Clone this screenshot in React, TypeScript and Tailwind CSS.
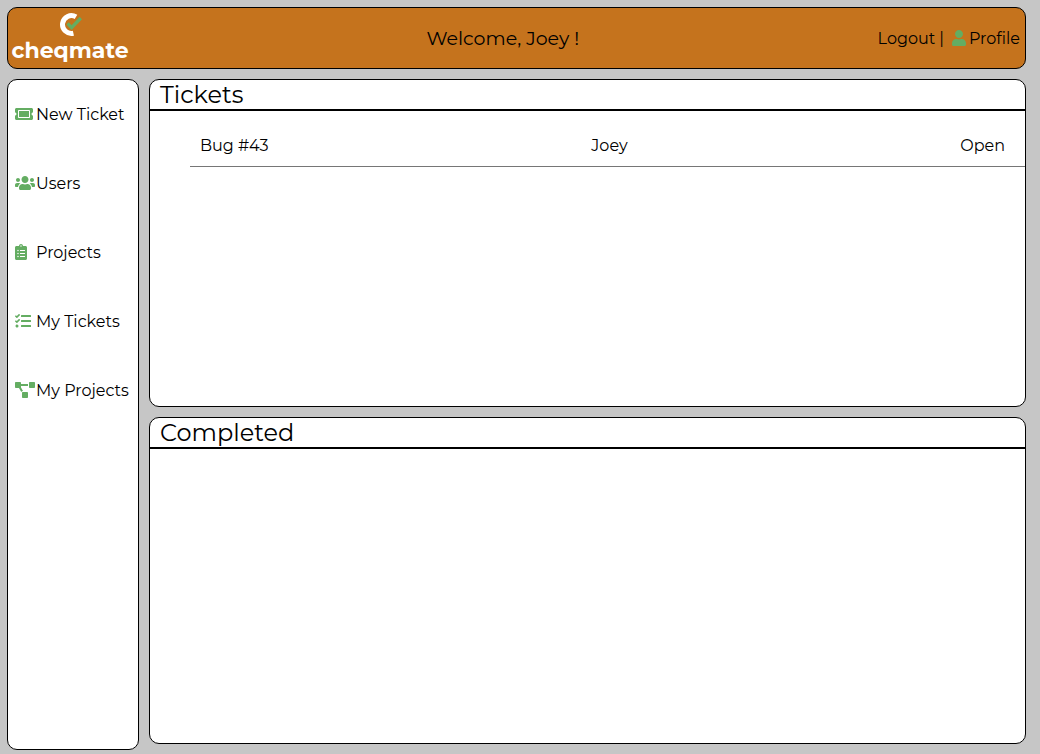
import type { ReactNode } from "react";
import {
  FaClipboardList,
  FaProjectDiagram,
  FaTasks,
  FaTicketAlt,
  FaUser,
  FaUsers,
} from "react-icons/fa";

type Ticket = { title: string; owner: string; status: string };

const openTickets: Ticket[] = [{ title: "Bug #43", owner: "Joey", status: "Open" }];

const navItems = [
  { label: "New Ticket", icon: <FaTicketAlt className="h-4 w-[18px]" /> },
  { label: "Users", icon: <FaUsers className="h-4 w-5" /> },
  { label: "Projects", icon: <FaClipboardList className="h-4 w-3" /> },
  { label: "My Tickets", icon: <FaTasks className="h-4 w-4" /> },
  { label: "My Projects", icon: <FaProjectDiagram className="h-4 w-5" /> },
];

function Logo() {
  return (
    <a href="#home" className="flex w-[116px] flex-col items-center text-white">
      <svg viewBox="0 0 24 24" className="h-6 w-6" fill="none" aria-hidden="true">
        <path d="M18 3.9A8.9 8.9 0 1 0 15.4 20.2" stroke="#fff" strokeWidth="5" />
        <path d="M9.6 10.4L13.6 14.6L22.8 5" stroke="#64ad62" strokeWidth="3.3" />
      </svg>
      <span className="text-[22px] leading-7 font-bold">cheqmate</span>
    </a>
  );
}

function Panel({ title, children }: { title: string; children?: ReactNode }) {
  return (
    <section className="overflow-hidden rounded-[10px] border border-black bg-white">
      <h2 className="border-b-2 border-black px-2.5 text-2xl leading-[29px]">{title}</h2>
      {children}
    </section>
  );
}

export default function App() {
  return (
    <div className="flex min-h-screen flex-col gap-2.5 bg-[#c6c6c6] pt-[7px] pr-[14px] pb-1 pl-[7px] font-['Montserrat','Inter',sans-serif] text-base text-black">
      <header className="flex h-[62px] items-center justify-between rounded-[10px] border border-black bg-[#c5731d] pt-0.5 pr-[5px] pl-1">
        <Logo />
        <h1 className="text-[19px]">Welcome, Joey !</h1>
        <div className="flex items-center gap-1">
          <a href="#logout">Logout</a>
          <span>|</span>
          <a href="#profile" className="flex items-center gap-[3px] pl-1">
            <span className="pb-0.5 text-[#64ad62]">
              <FaUser className="h-4 w-3.5" />
            </span>
            Profile
          </a>
        </div>
      </header>

      <div className="flex flex-1 gap-2.5">
        <nav className="w-[132px] shrink-0 rounded-[10px] border border-black bg-white pl-[7px]">
          <ul>
            {navItems.map((item) => (
              <li key={item.label}>
                <a href="#" className="flex h-[69px] items-center whitespace-nowrap">
                  <span className="w-[21px] shrink-0 pb-0.5 text-[#64ad62]">{item.icon}</span>
                  {item.label}
                </a>
              </li>
            ))}
          </ul>
        </nav>

        <main className="grid min-w-0 flex-1 grid-rows-2 gap-2.5 pb-1.5">
          <Panel title="Tickets">
            <div className="pt-4 pl-10">
              <table className="w-full table-fixed border-collapse" aria-label="Open tickets">
                <tbody>
                  {openTickets.map((ticket) => (
                    <tr key={ticket.title} className="h-[39px] border-b border-[#767676]">
                      <td className="pl-2.5 text-left">{ticket.title}</td>
                      <td className="pl-1 text-center">{ticket.owner}</td>
                      <td className="pr-5 text-right">{ticket.status}</td>
                    </tr>
                  ))}
                </tbody>
              </table>
            </div>
          </Panel>
          <Panel title="Completed" />
        </main>
      </div>
    </div>
  );
}
